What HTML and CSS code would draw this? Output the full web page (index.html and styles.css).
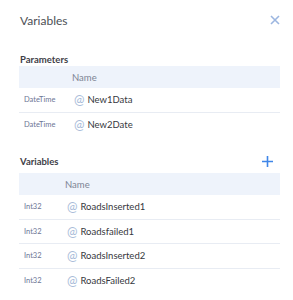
FILE: index.html
```html
<!DOCTYPE html>
<html lang="en">
<head>
  <meta charset="UTF-8" />
  <title>Variables</title>
  <link rel="stylesheet" href="styles.css">
</head>
<body>
  <div class="panel">
    <div class="panel-header">
      <h1>Variables</h1>
      <button class="close-btn" aria-label="Close">
        <svg width="10" height="10" viewBox="0 0 10 10"><path d="M1 1L9 9M9 1L1 9" stroke="#9cb6e0" stroke-width="1.6" fill="none"/></svg>
      </button>
    </div>

    <div class="section params">
      <div class="section-title">Parameters</div>
      <div class="table">
        <div class="row head"><span class="type"></span><span class="name">Name</span></div>
        <div class="row"><span class="type">DateTime</span><span class="name"><i>@</i>New1Data</span></div>
        <div class="row"><span class="type">DateTime</span><span class="name"><i>@</i>New2Date</span></div>
      </div>
    </div>

    <div class="section vars">
      <div class="section-title">
        Variables
        <button class="add-btn" aria-label="Add">
          <svg width="11" height="11" viewBox="0 0 11 11"><path d="M5.5 0V11M0 5.5H11" stroke="#3f86e8" stroke-width="1.6" fill="none"/></svg>
        </button>
      </div>
      <div class="table">
        <div class="row head"><span class="type"></span><span class="name">Name</span></div>
        <div class="row"><span class="type">Int32</span><span class="name"><i>@</i>RoadsInserted1</span></div>
        <div class="row"><span class="type">Int32</span><span class="name"><i>@</i>Roadsfailed1</span></div>
        <div class="row"><span class="type">Int32</span><span class="name"><i>@</i>RoadsInserted2</span></div>
        <div class="row"><span class="type">Int32</span><span class="name"><i>@</i>RoadsFailed2</span></div>
      </div>
    </div>
  </div>
</body>
</html>
```

FILE: styles.css
```css
* {
  box-sizing: border-box;
  margin: 0;
  padding: 0;
}

body {
  font-family: 'Lato', sans-serif;
  background: #fff;
  color: #333;
}

.panel {
  padding: 0 13px 0 19px;
}

.panel-header {
  height: 40px;
  display: flex;
  align-items: center;
  justify-content: space-between;
  padding-left: 1px;
}

h1 {
  font-size: 12px;
  font-weight: 400;
  color: #4d4f55;
}

.close-btn, .add-btn {
  background: none;
  border: none;
  display: flex;
  cursor: pointer;
}

.section-title {
  font-size: 9.5px;
  font-weight: 700;
  color: #3e4047;
  height: 14px;
  display: flex;
  align-items: center;
  justify-content: space-between;
  padding-left: 1px;
}

.params {
  margin-top: 12px;
}

.vars {
  margin-top: 17px;
}

.vars .section-title {
  padding-right: 7px;
  margin-bottom: 5px;
}

.row {
  display: flex;
  align-items: center;
  height: 24.5px;
  border-bottom: 1px solid #e8ecf3;
  padding-left: 5px;
}

.row:last-child {
  border-bottom: none;
}

.row.head {
  background: #eef3fb;
  height: 22px;
  border-bottom: none;
}

.head .name {
  color: #7d8494;
}

.type {
  font-size: 7.5px;
  color: #6c7595;
  flex: none;
}

.params .type { width: 48px; }
.vars .type { width: 41px; }

.name {
  font-size: 9.5px;
  color: #363840;
  display: flex;
  align-items: center;
}

.name i {
  font-style: normal;
  font-size: 12.5px;
  color: #a9bcd9;
  margin: 0 3px 0 2px;
}
```
